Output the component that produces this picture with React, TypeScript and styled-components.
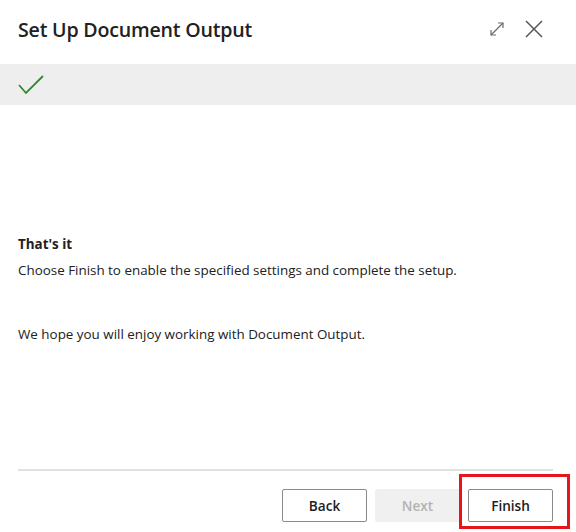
import React from "react";
import styled, { createGlobalStyle } from "styled-components";

const Global = createGlobalStyle`
  html, body { margin: 0; padding: 0; background: #ffffff; }
  body { font-family: "Open Sans", "Noto Sans", sans-serif; color: #212121; }
`;

const Dialog = styled.div`
  width: 576px;
  height: 532px;
  display: flex;
  flex-direction: column;
  background: #ffffff;
  overflow: hidden;
`;

const Header = styled.header`
  height: 64px;
  display: flex;
  align-items: center;
  justify-content: space-between;
  padding: 0 33px 0 18px;
  box-sizing: border-box;
`;

const Title = styled.h1`
  margin: 0;
  font-size: 19.6px;
  font-weight: 600;
  letter-spacing: -0.2px;
  color: #212121;
  padding-bottom: 6px;
`;

const HeaderActions = styled.div`
  display: flex;
  align-items: center;
  gap: 20px;
  padding-bottom: 6px;
`;

const IconButton = styled.button`
  border: 0;
  background: transparent;
  padding: 0;
  display: flex;
  cursor: pointer;
`;

const StepBand = styled.div`
  height: 41px;
  background: #eeeeee;
  display: flex;
  align-items: center;
  padding-left: 18px;
`;

const Content = styled.main`
  flex: 1;
  padding: 130px 18px 0;
  display: flex;
  flex-direction: column;
`;

const Heading = styled.div`
  font-size: 13.4px;
  font-weight: 700;
  line-height: 18px;
  margin-bottom: 8px;
`;

const Paragraph = styled.p<{ $gap?: number }>`
  margin: 0;
  margin-top: ${(p) => p.$gap ?? 0}px;
  font-size: 13.4px;
  line-height: 18px;
  color: #212121;
`;

const Footer = styled.footer`
  margin: 0 23px 0 18px;
  border-top: 2px solid #e1e1e1;
  padding: 18px 0 10px;
  display: flex;
  justify-content: flex-end;
  gap: 8px;
`;

const Button = styled.button<{ $disabled?: boolean }>`
  width: 85px;
  height: 33px;
  box-sizing: border-box;
  border-radius: 2px;
  font-family: "Open Sans", "Noto Sans", sans-serif;
  font-size: 13.6px;
  font-weight: 600;
  border: 1px solid ${(p) => (p.$disabled ? "#f0f0f0" : "#8a8a8a")};
  background: ${(p) => (p.$disabled ? "#f0f0f0" : "#ffffff")};
  color: ${(p) => (p.$disabled ? "#b3b3b3" : "#212121")};
`;

/* red callout frame drawn around the primary action */
const Highlight = styled.div`
  position: relative;
  display: flex;

  &::after {
    content: "";
    position: absolute;
    top: -15px;
    left: -9px;
    right: -17px;
    bottom: -7px;
    border: 3px solid #e8141c;
    pointer-events: none;
  }
`;

const Expand = () => (
  <svg width="16" height="16" viewBox="0 0 16 16" fill="none" stroke="#6b6b6b" strokeWidth="1.2">
    <path d="M2 14 L14 2" />
    <path d="M9 2 H14 V7" />
    <path d="M2 9 V14 H7" />
  </svg>
);

const Close = () => (
  <svg width="18" height="18" viewBox="0 0 18 18" fill="none" stroke="#555555" strokeWidth="1.5">
    <path d="M1 1 L17 17 M17 1 L1 17" />
  </svg>
);

const Check = () => (
  <svg width="26" height="20" viewBox="0 0 26 20" fill="none" stroke="#2e8b2e" strokeWidth="1.8">
    <path d="M1 10 L8 18 L25 1" />
  </svg>
);

export default function App() {
  return (
    <>
      <Global />
      <Dialog>
        <Header>
          <Title>Set Up Document Output</Title>
          <HeaderActions>
            <IconButton aria-label="Expand">
              <Expand />
            </IconButton>
            <IconButton aria-label="Close">
              <Close />
            </IconButton>
          </HeaderActions>
        </Header>
        <StepBand>
          <Check />
        </StepBand>
        <Content>
          <Heading>That's it</Heading>
          <Paragraph>Choose Finish to enable the specified settings and complete the setup.</Paragraph>
          <Paragraph $gap={46}>We hope you will enjoy working with Document Output.</Paragraph>
        </Content>
        <Footer>
          <Button>Back</Button>
          <Button $disabled>Next</Button>
          <Highlight>
            <Button>Finish</Button>
          </Highlight>
        </Footer>
      </Dialog>
    </>
  );
}
